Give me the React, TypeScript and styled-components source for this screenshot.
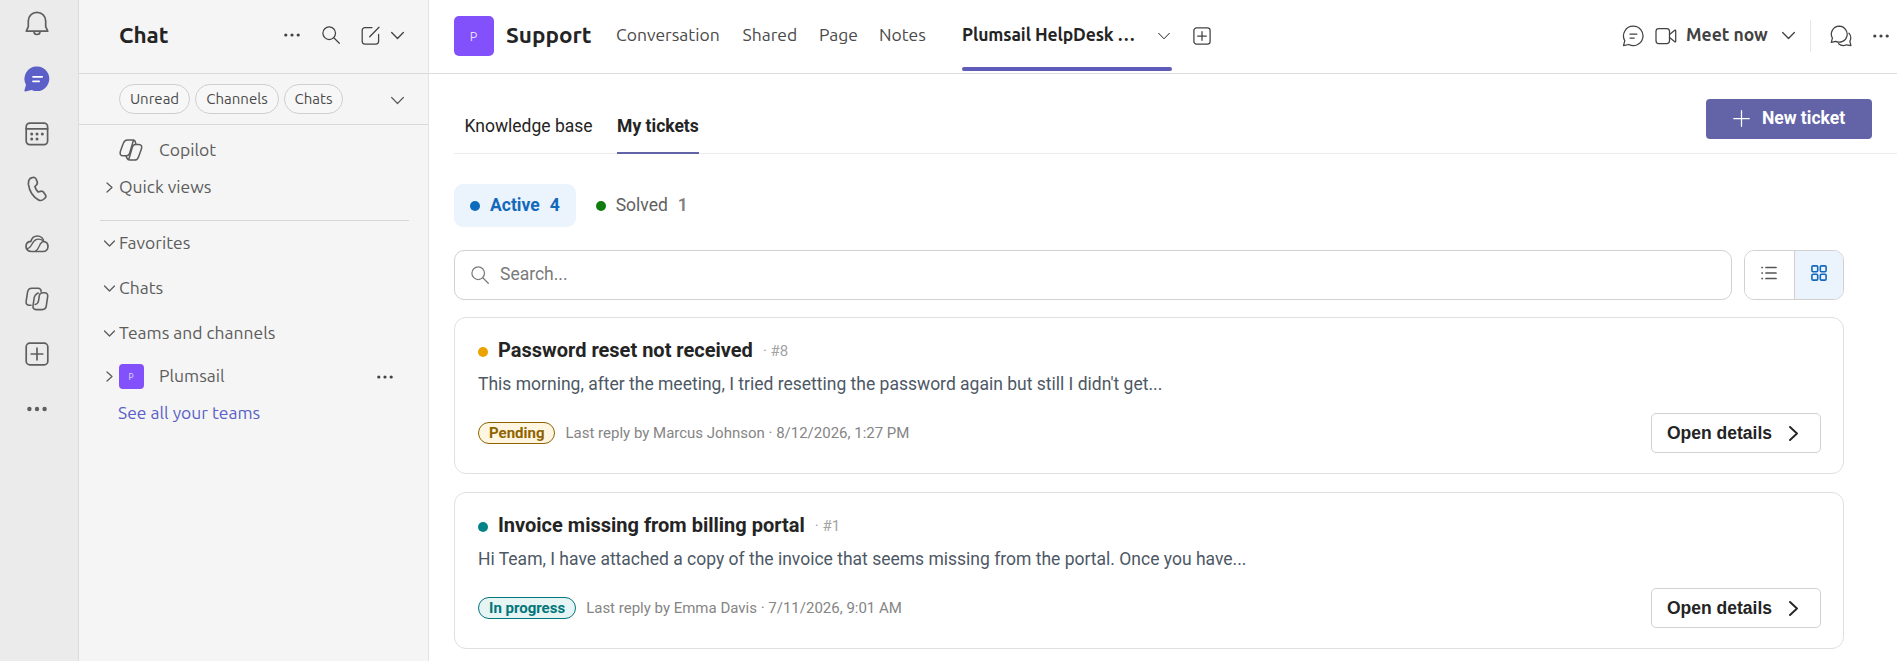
import React from "react";
import styled, { createGlobalStyle, css } from "styled-components";

const uiFont = `Ubuntu, "Noto Sans", "Open Sans", sans-serif`;
const appFont = `Roboto, "Liberation Sans", sans-serif`;

const GlobalStyle = createGlobalStyle`
  * { box-sizing: border-box; }
  html, body { margin: 0; padding: 0; background: #fff; overflow: hidden; }
  svg { display: block; flex: none; }
  button { margin: 0; }
`;

/* ---------- shell ---------- */

const Shell = styled.div`
  display: flex;
  width: 100%;
  height: 661px;
  overflow: hidden;
  font-family: ${uiFont};
  font-size: 17.5px;
  color: #5c5c5c;
`;

const Rail = styled.nav`
  display: flex;
  flex-direction: column;
  flex: none;
  width: 79px;
  padding-right: 4px;
  background: #ebebeb;
  border-right: 1px solid #dcdcdc;
  overflow: hidden;
`;

const RailItem = styled.div<{ $first?: boolean }>`
  display: flex;
  align-items: center;
  justify-content: center;
  flex: none;
  height: 55px;
  margin-top: ${(p) => (p.$first ? "-4px" : "0")};
  color: #5f5f5f;
`;

const Sidebar = styled.aside`
  display: flex;
  flex-direction: column;
  flex: none;
  width: 350px;
  background: #f5f5f5;
  border-right: 1px solid #e3e3e3;
`;

const Main = styled.main`
  display: flex;
  flex-direction: column;
  flex: 1;
  min-width: 0;
  background: #fff;
`;

/* ---------- text ---------- */

const Label = styled.span<{ $track?: number; $size?: number; $weight?: number; $color?: string }>`
  white-space: nowrap;
  letter-spacing: ${(p) => p.$track ?? 0}px;
  ${(p) => p.$size && css`font-size: ${p.$size}px;`}
  ${(p) => p.$weight && css`font-weight: ${p.$weight};`}
  ${(p) => p.$color && css`color: ${p.$color};`}
`;

/* ---------- sidebar ---------- */

const SideHeader = styled.header`
  display: flex;
  align-items: center;
  flex: none;
  height: 74px;
  padding: 0 24px 3px 40px;
  border-bottom: 1px solid #d9d9d9;
  color: #424242;
`;

const SideTitle = styled(Label)`
  padding-bottom: 2px;
`;

const SideTools = styled.div`
  display: flex;
  align-items: center;
  margin-left: auto;
`;

const ComposeTool = styled.div`
  display: flex;
  align-items: center;
  gap: 11px;
  margin-left: 21px;
`;

const SearchTool = styled.div`
  margin-left: 22px;
`;

const ChipBar = styled.div`
  display: flex;
  align-items: center;
  flex: none;
  height: 51px;
  padding: 0 24px 0 40px;
  gap: 5px;
  border-bottom: 1px solid #d9d9d9;
`;

const Chip = styled.div<{ $w: number }>`
  display: flex;
  align-items: center;
  justify-content: center;
  width: ${(p) => p.$w}px;
  height: 30px;
  padding-bottom: 1px;
  border: 1px solid #cfcfcf;
  border-radius: 15px;
  background: #f7f7f7;
  font-size: 15px;
  color: #4a4a4a;
`;

const ChipMenu = styled.div`
  margin-left: auto;
  padding-top: 2px;
`;

const Tree = styled.div`
  display: flex;
  flex-direction: column;
  padding-top: 6px;
`;

const TreeRow = styled.div<{ $h: number }>`
  display: flex;
  align-items: center;
  flex: none;
  height: ${(p) => p.$h}px;
  padding-right: 35px;
`;

const TreeArrow = styled.div`
  display: flex;
  justify-content: center;
  width: 20px;
  margin-left: 20px;
  padding: 2px 0 0 1px;
`;

const TreeIcon = styled.div<{ $indent?: boolean }>`
  width: 40px;
  margin-left: ${(p) => (p.$indent ? "40px" : "0")};
  margin-top: ${(p) => (p.$indent ? "0" : "2px")};
`;

const TreeMore = styled.div`
  margin: 2px 0 0 auto;
  color: #424242;
`;

const TreeLink = styled.div`
  display: flex;
  align-items: center;
  height: 32px;
  padding-left: 39px;
  color: #5b5fc7;
`;

const TreeDivider = styled.div`
  height: 1px;
  margin: 15px 19px -1px 21px;
  background: #d6d6d6;
`;

const Avatar = styled.div<{ $size: number }>`
  display: flex;
  align-items: center;
  justify-content: center;
  flex: none;
  width: ${(p) => p.$size}px;
  height: ${(p) => p.$size}px;
  padding-right: 1px;
  border-radius: ${(p) => (p.$size > 30 ? 5 : 4)}px;
  background: #8351fb;
  color: #e9e0ff;
  font-size: ${(p) => (p.$size > 30 ? 12.5 : 8.5)}px;
`;

/* ---------- channel header ---------- */

const ChannelHeader = styled.header`
  display: flex;
  flex: none;
  height: 74px;
  padding-left: 25px;
  border-bottom: 1px solid #dcdcdc;
  color: #4a4a4a;
`;

const ChannelTitle = styled.div`
  display: flex;
  align-items: center;
  width: 162px;
  padding-bottom: 1px;
  gap: 12px;
`;

const ChannelName = styled(Label)`
  padding-bottom: 3px;
`;

const ChannelTab = styled.div<{ $w: number; $active?: boolean }>`
  display: flex;
  flex-direction: column;
  flex: none;
  width: ${(p) => p.$w}px;
  ${(p) =>
    p.$active &&
    css`
      color: #242424;
      font-weight: 700;
    `}
`;

const TabLine = styled.div`
  display: flex;
  align-items: center;
  height: 67px;
  padding-top: 2px;
`;

const TabChevron = styled.div`
  margin-left: auto;
  padding: 2px 2px 0 0;
`;

const TabBar = styled.div`
  width: 210px;
  height: 4px;
  border-radius: 2px;
  background: #5f5bb8;
`;

const HeaderTools = styled.div`
  display: flex;
  align-items: center;
  height: 71px;
  margin-left: auto;
  padding-right: 8px;
  color: #424242;
`;

const AddTab = styled.div`
  display: flex;
  align-items: center;
  height: 71px;
  margin-left: 21px;
  color: #424242;
`;

const MeetNow = styled.div`
  display: flex;
  align-items: center;
  width: 155px;
  margin-left: 11px;
`;

const MeetLabel = styled(Label)`
  width: 96px;
  margin-left: 9px;
  padding-bottom: 2px;
`;

const Separator = styled.div`
  width: 1px;
  height: 32px;
  margin-right: 19px;
  background: #e6e6e6;
`;

const MoreTool = styled.div`
  margin-left: 21px;
`;

/* ---------- help desk ---------- */

const Desk = styled.section`
  display: flex;
  flex-direction: column;
  padding-left: 25px;
  font-family: ${appFont};
  font-size: 17.5px;
`;

const DeskTabs = styled.div`
  display: flex;
  height: 80px;
  padding: 0 25px 0 10.5px;
  border-bottom: 1px solid #ebebeb;
  color: #242424;
`;

const DeskTab = styled.div<{ $active?: boolean }>`
  height: 80px;
  padding-top: 42px;
  line-height: 20px;
  margin-right: 24.5px;
  white-space: nowrap;
  ${(p) =>
    p.$active &&
    css`
      font-weight: 700;
      border-bottom: 2px solid #6264a7;
    `}
`;

const NewTicket = styled.button`
  display: flex;
  align-items: center;
  justify-content: center;
  gap: 12px;
  width: 166px;
  height: 40px;
  margin: 25px 0 0 auto;
  padding: 0 0 2px;
  border: 0;
  border-radius: 4px;
  background: #6264a7;
  color: #fff;
  font: 700 17.5px ${appFont};
  white-space: nowrap;
`;

const Filters = styled.div`
  display: flex;
  align-items: center;
  height: 43px;
  margin-top: 30px;
  gap: 4px;
`;

const Filter = styled.div<{ $active?: boolean }>`
  display: flex;
  align-items: center;
  height: 43px;
  padding: 0 16px 2px;
  border-radius: 9px;
  color: ${(p) => (p.$active ? "#1269bb" : "#616161")};
  background: ${(p) => (p.$active ? "#ebf3fc" : "transparent")};
  font-weight: ${(p) => (p.$active ? 700 : 400)};
`;

const Dot = styled.span<{ $color: string }>`
  flex: none;
  width: 10px;
  height: 10px;
  margin: 3px 10px 0 0;
  border-radius: 50%;
  background: ${(p) => p.$color};
`;

const Count = styled.span<{ $active?: boolean }>`
  margin-left: 10px;
  color: ${(p) => (p.$active ? "#1269bb" : "#808080")};
  font-weight: ${(p) => (p.$active ? 700 : 600)};
`;

const Finder = styled.div`
  display: flex;
  gap: 12px;
  width: 1390px;
  margin-top: 23px;
`;

const SearchBox = styled.div`
  display: flex;
  align-items: center;
  flex: 1;
  height: 50px;
  padding: 0 0 3px 16px;
  gap: 11px;
  border: 1px solid #d1d1d1;
  border-radius: 10px;
  color: #7a7a7a;
`;

const SearchGlyph = styled.div`
  padding-top: 2px;
`;

const ViewSwitch = styled.div`
  display: flex;
  width: 100px;
  height: 50px;
  border: 1px solid #d1d1d1;
  border-radius: 10px;
  overflow: hidden;
`;

const ViewButton = styled.div<{ $active?: boolean }>`
  display: flex;
  align-items: center;
  justify-content: center;
  flex: 1;
  padding-bottom: 5px;
  color: ${(p) => (p.$active ? "#1269bb" : "#555")};
  background: ${(p) => (p.$active ? "#ebf3fc" : "#fff")};
  & + & { border-left: 1px solid #d1d1d1; }
`;

const TicketList = styled.div`
  display: flex;
  flex-direction: column;
  width: 1390px;
  margin-top: 17px;
  gap: 18px;
`;

const Ticket = styled.article`
  height: 157px;
  padding: 19px 22px 0 23px;
  border: 1px solid #e0e0e0;
  border-radius: 12px;
`;

const TicketHead = styled.div`
  display: flex;
  align-items: center;
  height: 26px;
`;

const TicketTitle = styled.h3`
  margin: 0;
  font-size: 20px;
  font-weight: 700;
  line-height: 24px;
  color: #242424;
`;

const TicketId = styled.span`
  margin-left: 10px;
  padding-top: 1px;
  font-size: 15px;
  color: #a3a3a3;
`;

const Summary = styled.p`
  margin: 10px 0 0;
  font-size: 17.5px;
  line-height: 22px;
  color: #4d5865;
`;

const TicketFoot = styled.div`
  display: flex;
  align-items: center;
  height: 40px;
  margin-top: 18px;
`;

const Badge = styled.span<{ $fg: string; $bg: string }>`
  display: flex;
  align-items: center;
  height: 22px;
  padding: 0 10px;
  border: 1px solid ${(p) => p.$fg};
  border-radius: 11px;
  background: ${(p) => p.$bg};
  color: ${(p) => p.$fg};
  font-size: 15px;
  font-weight: 700;
  white-space: nowrap;
`;

const Reply = styled.span`
  margin-left: 10px;
  font-size: 15px;
  color: #858585;
`;

const OpenButton = styled.button`
  display: flex;
  align-items: center;
  width: 170px;
  height: 40px;
  margin-left: auto;
  padding: 0 0 0 15px;
  gap: 17px;
  border: 1px solid #d1d1d1;
  border-radius: 5px;
  background: #fff;
  color: #242424;
  font: 700 17.5px "Liberation Sans", Arial, sans-serif;
  white-space: nowrap;
`;

/* ---------- icons ---------- */

type StrokeProps = { w: number; h?: number; box?: string; sw?: number; children: React.ReactNode };

const Stroke = ({ w, h = w, box, sw = 1.25, children }: StrokeProps) => (
  <svg
    width={w}
    height={h}
    viewBox={box ?? `0 0 ${w} ${h}`}
    fill="none"
    stroke="currentColor"
    strokeWidth={sw}
    strokeLinecap="round"
    strokeLinejoin="round"
  >
    {children}
  </svg>
);

const Chevron = ({ w = 12, sw = 1.25 }: { w?: number; sw?: number }) => (
  <Stroke w={w} h={w} box="0 0 12 12" sw={(sw * 12) / w}>
    <path d="M.6 3.200 6 8.800l5.400-5.600" />
  </Stroke>
);

const ChevronRight = ({ w, h, sw }: { w: number; h: number; sw: number }) => (
  <Stroke w={w} h={h} sw={sw}>
    <path d={`M1 1 ${w - 1} ${h / 2} 1 ${h - 1}`} />
  </Stroke>
);

const Dots = ({ w = 16, r = 1.6 }: { w?: number; r?: number }) => (
  <svg width={w} height={6} fill="currentColor">
    <circle cx={r + 0.2} cy="3" r={r} />
    <circle cx={w / 2} cy="3" r={r} />
    <circle cx={w - r - 0.2} cy="3" r={r} />
  </svg>
);

const Magnifier = () => (
  <Stroke w={18} sw={1.25}>
    <circle cx="7.200" cy="7.200" r="6.300" />
    <path d="m11.800 11.800 5.500 5.500" />
  </Stroke>
);

const Bell = () => (
  <Stroke w={24} h={26} sw={1.7}>
    <path d="M12 1.400c-5 0-8.700 3.900-8.700 8.700v5.600L1.300 20.200h21.400l-2-4.500v-5.600c0-4.800-3.700-8.700-8.700-8.700Z" />
    <path d="M9 20.500a3 3 0 0 0 6 0" />
  </Stroke>
);

const ChatFilled = () => (
  <svg width="26" height="26">
    <path
      d="M13.200.5a12.300 12.300 0 1 1-5.500 23.400L1.300 25.400c-.6.1-1.100-.4-.9-1l1.600-5.700A12.300 12.300 0 0 1 13.200.5Z"
      fill="#5b5fc7"
    />
    <path d="M9 10.800h9.200M9 15.300h6.200" stroke="#fff" strokeWidth="1.700" strokeLinecap="round" />
  </svg>
);

const CalendarGlyph = () => (
  <Stroke w={24} sw={1.7}>
    <rect x="1.200" y="1.200" width="21.400" height="21.400" rx="3.500" />
    <path d="M1.200 6.800h21.400" />
    <g fill="currentColor" stroke="none">
      <circle cx="6.700" cy="12" r="1.500" />
      <circle cx="12" cy="12" r="1.500" />
      <circle cx="17.300" cy="12" r="1.500" />
      <circle cx="6.700" cy="17" r="1.500" />
      <circle cx="12" cy="17" r="1.500" />
    </g>
  </Stroke>
);

const PhoneGlyph = () => (
  <Stroke w={20} h={26} sw={1.7}>
    <path d="m4.500 1.900 1.300-.4c1.700-.5 2.800.3 3.400 1.800l.9 2.300c.5 1.300.2 2.500-.7 3.400L7.900 10.500c.5 2.100 1.600 4 3.300 5.500l2.200-.6c1.300-.4 2.500 0 3.300 1l1.500 2c.9 1.200.8 2.700-.3 3.700l-.9.900c-1.400 1.300-3.300 1.900-5.200 1.100-5.600-2.500-9.500-9.100-10.300-15.400C1.200 5.500 2 2.700 4.500 1.900Z" />
  </Stroke>
);

const CloudGlyph = () => (
  <Stroke w={24} h={18} sw={1.7}>
    <path d="M6.300 16.500c-3 0-5.300-2-5.300-5 0-2.900 2.100-4.900 4.800-5.100C6.700 3.200 9.200 1 12.300 1c3.400 0 6 2.300 6.400 5.500 2.500.3 4.300 2.400 4.300 5 0 2.800-2.200 5-5 5Z" />
    <path
      d="M1.700 13.800c2.900-.3 4-2.300 5.200-4.600C8 7 9.200 5 11.800 4.400c2.700-.6 5.200.1 6.700 2M10.500 16.200c1.800-.9 2.700-2.600 3.700-4.900 1.200-3 2.300-4.600 4.500-4.800"
      strokeWidth="1.400"
    />
  </Stroke>
);

const LoopGlyph = () => (
  <Stroke w={24} sw={1.6}>
    <path d="M6 18.200H4.200c-2.100 0-3.400-1.500-3.100-3.600L2.600 4.900C3 2.700 4.600 1.300 6.900 1.300h6.200c2 0 3.100 1.300 3 3.200" />
    <path d="M10.300 17.500c2.200-.5 3-2 3.300-4l.6-4.200c.3-2.300 1.600-3.500 3.700-3.500h1.600c2.200 0 3.500 1.500 3.200 3.600l-1.400 9.500c-.3 2.300-1.900 3.700-4.100 3.700h-6c-2.500 0-3.500-1.600-3.200-3.600l1-7.200c.4-3 1.600-4.800 4.200-5.800" />
  </Stroke>
);

const PlusBox = ({ w, sw }: { w: number; sw: number }) => (
  <Stroke w={w} box="0 0 24 24" sw={(sw * 24) / w}>
    <rect x="1.200" y="1.200" width="21.600" height="21.600" rx="3.600" />
    <path d="M12 6.200v11.600M6.200 12h11.600" />
  </Stroke>
);

const CopilotGlyph = () => (
  <Stroke w={24} h={22} sw={1.5}>
    <path d="M16.900 5.200l-.5-2.100C16.100 1.700 15.300.9 14 .9H8.400C6.200.9 5 2.200 4.300 4.300L1.500 12.100c-1 3 .2 4.700 2.600 4.700h3.300c1.700 0 2.700-.9 3.200-2.500l3-10.200c.3-1.100.6-2.500 1.300-3.100" />
    <path d="m7 16.900.8 2c.6 1.500 1.500 2.200 3 2.200h4.700c2.200 0 3.300-1.100 4-3.200l2.900-7.900c1-2.800-.2-4.500-2.600-4.500h-3.200c-1.700 0-2.700.9-3.200 2.500l-3 10.200c-.3 1.200-.6 2.100-1.200 2.700" />
  </Stroke>
);

const Compose = () => (
  <Stroke w={19} sw={1.25}>
    <path d="M11 1.500H4A2.800 2.800 0 0 0 1.200 4.300v10.900A2.800 2.800 0 0 0 4 18h10.800a2.800 2.800 0 0 0 2.800-2.800V8.300" />
    <path d="M8.700 10.800 18 1.200" />
  </Stroke>
);

const ChatOutline = () => (
  <Stroke w={22} sw={1.25}>
    <path d="M11.300 1.200a9.700 9.700 0 1 1-4.500 18.300L1.500 20.700l1.300-5A9.700 9.700 0 0 1 11.300 1.200Z" />
    <path d="M8 9.200h6.800M8 13h4.200" />
  </Stroke>
);

const Video = () => (
  <Stroke w={22} h={18} sw={1.25}>
    <rect x="1" y="1.500" width="13.500" height="15" rx="2.800" />
    <path d="m14.500 7.500 5.300-4.200c.5-.4.900-.2.900.4v10.600c0 .6-.4.800-.9.400l-5.300-4.200" />
  </Stroke>
);

const ChatsOutline = () => (
  <Stroke w={22} sw={1.25}>
    <path d="M9.300 1.200a8 8 0 1 1-3.600 15.200L1.300 17.400l1.100-4.300A8 8 0 0 1 9.300 1.200Z" />
    <path d="M18.900 8.200a7.300 7.300 0 0 1 1 8.100l1 4.400-4.300-.9c-2.700 1.300-5.900.8-8-1.100" />
  </Stroke>
);

const ListGlyph = () => (
  <Stroke w={16} h={14} sw={1.7}>
    <path d="M5 1.500h10M5 7h10M5 12.500h10M1 1.500h.3M1 7h.3M1 12.500h.3" />
  </Stroke>
);

const GridGlyph = () => (
  <Stroke w={16} sw={1.6}>
    <rect x=".9" y=".9" width="5.800" height="5.800" rx="1.200" />
    <rect x="9.300" y=".9" width="5.800" height="5.800" rx="1.200" />
    <rect x=".9" y="9.300" width="5.800" height="5.800" rx="1.200" />
    <rect x="9.300" y="9.300" width="5.800" height="5.800" rx="1.200" />
  </Stroke>
);

const PlusThin = () => (
  <Stroke w={17} sw={1.25}>
    <path d="M8.500.7v15.600M.7 8.500h15.600" />
  </Stroke>
);

/* ---------- data ---------- */

const tickets = [
  {
    id: 8,
    title: "Password reset not received",
    dot: "#eaa300",
    text: "This morning, after the meeting, I tried resetting the password again but still I didn't get...",
    status: "Pending",
    fg: "#8f6400",
    bg: "#fff6e2",
    reply: "Last reply by Marcus Johnson · 8/12/2026, 1:27 PM",
  },
  {
    id: 1,
    title: "Invoice missing from billing portal",
    dot: "#038387",
    text: "Hi Team, I have attached a copy of the invoice that seems missing from the portal. Once you have...",
    status: "In progress",
    fg: "#02767a",
    bg: "#e6f4f4",
    reply: "Last reply by Emma Davis · 7/11/2026, 9:01 AM",
  },
];

const groups = ["Favorites", "Chats", "Teams and channels"];

const channelTabs = [
  { name: "Conversation", w: 126.5 },
  { name: "Shared", w: 76.5 },
  { name: "Page", w: 60 },
  { name: "Notes", w: 83 },
];

const railIcons = [
  <Bell />,
  <ChatFilled />,
  <CalendarGlyph />,
  <PhoneGlyph />,
  <CloudGlyph />,
  <LoopGlyph />,
  <PlusBox w={24} sw={1.7} />,
  <Dots w={20} r={2.2} />,
];

export default function App() {
  return (
    <Shell>
      <GlobalStyle />
      <Rail>
        {railIcons.map((icon, i) => (
          <RailItem key={i} $first={i === 0}>
            {icon}
          </RailItem>
        ))}
      </Rail>

      <Sidebar>
        <SideHeader>
          <SideTitle $size={22.5} $weight={700} $color="#242424">Chat</SideTitle>
          <SideTools>
            <Dots />
            <SearchTool><Magnifier /></SearchTool>
            <ComposeTool>
              <Compose />
              <Chevron w={13} sw={1.3} />
            </ComposeTool>
          </SideTools>
        </SideHeader>
        <ChipBar>
          <Chip $w={71}>Unread</Chip>
          <Chip $w={84}>Channels</Chip>
          <Chip $w={59}>Chats</Chip>
          <ChipMenu><Chevron w={13} sw={1.2} /></ChipMenu>
        </ChipBar>
        <Tree>
          <TreeRow $h={37}>
            <TreeIcon $indent><CopilotGlyph /></TreeIcon>
            <Label>Copilot</Label>
          </TreeRow>
          <TreeRow $h={37}>
            <TreeArrow><ChevronRight w={7} h={11} sw={1.3} /></TreeArrow>
            <Label>Quick views</Label>
          </TreeRow>
          <TreeDivider />
          {groups.map((name) => (
            <TreeRow key={name} $h={45}>
              <TreeArrow><Chevron w={11} sw={1.3} /></TreeArrow>
              <Label>{name}</Label>
            </TreeRow>
          ))}
          <TreeRow $h={41}>
            <TreeArrow><ChevronRight w={7} h={11} sw={1.3} /></TreeArrow>
            <TreeIcon><Avatar $size={25}>P</Avatar></TreeIcon>
            <Label>Plumsail</Label>
            <TreeMore><Dots /></TreeMore>
          </TreeRow>
          <TreeLink><Label>See all your teams</Label></TreeLink>
        </Tree>
      </Sidebar>

      <Main>
        <ChannelHeader>
          <ChannelTitle>
            <Avatar $size={40}>P</Avatar>
            <ChannelName $size={22.5} $weight={700} $color="#242424">Support</ChannelName>
          </ChannelTitle>
          {channelTabs.map((t) => (
            <ChannelTab key={t.name} $w={t.w}>
              <TabLine><Label>{t.name}</Label></TabLine>
            </ChannelTab>
          ))}
          <ChannelTab $w={210} $active>
            <TabLine>
              <Label $track={-0.1}>Plumsail HelpDesk …</Label>
              <TabChevron><Chevron w={12} sw={1} /></TabChevron>
            </TabLine>
            <TabBar />
          </ChannelTab>
          <AddTab><PlusBox w={18} sw={1.25} /></AddTab>
          <HeaderTools>
            <ChatOutline />
            <MeetNow>
              <Video />
              <MeetLabel $weight={700}>Meet now</MeetLabel>
              <Chevron w={13} sw={1.3} />
            </MeetNow>
            <Separator />
            <ChatsOutline />
            <MoreTool><Dots /></MoreTool>
          </HeaderTools>
        </ChannelHeader>

        <Desk>
          <DeskTabs>
            <DeskTab>Knowledge base</DeskTab>
            <DeskTab $active>My tickets</DeskTab>
            <NewTicket><PlusThin />New ticket</NewTicket>
          </DeskTabs>
          <Filters>
            <Filter $active>
              <Dot $color="#0f6cbd" />Active<Count $active>4</Count>
            </Filter>
            <Filter>
              <Dot $color="#107c10" />Solved<Count>1</Count>
            </Filter>
          </Filters>
          <Finder>
            <SearchBox>
              <SearchGlyph><Magnifier /></SearchGlyph>
              Search...
            </SearchBox>
            <ViewSwitch>
              <ViewButton><ListGlyph /></ViewButton>
              <ViewButton $active><GridGlyph /></ViewButton>
            </ViewSwitch>
          </Finder>
          <TicketList>
            {tickets.map((t) => (
              <Ticket key={t.id}>
                <TicketHead>
                  <Dot $color={t.dot} />
                  <TicketTitle>{t.title}</TicketTitle>
                  <TicketId>· #{t.id}</TicketId>
                </TicketHead>
                <Summary>{t.text}</Summary>
                <TicketFoot>
                  <Badge $fg={t.fg} $bg={t.bg}>{t.status}</Badge>
                  <Reply>{t.reply}</Reply>
                  <OpenButton>
                    Open details
                    <ChevronRight w={9} h={15} sw={1.9} />
                  </OpenButton>
                </TicketFoot>
              </Ticket>
            ))}
          </TicketList>
        </Desk>
      </Main>
    </Shell>
  );
}
